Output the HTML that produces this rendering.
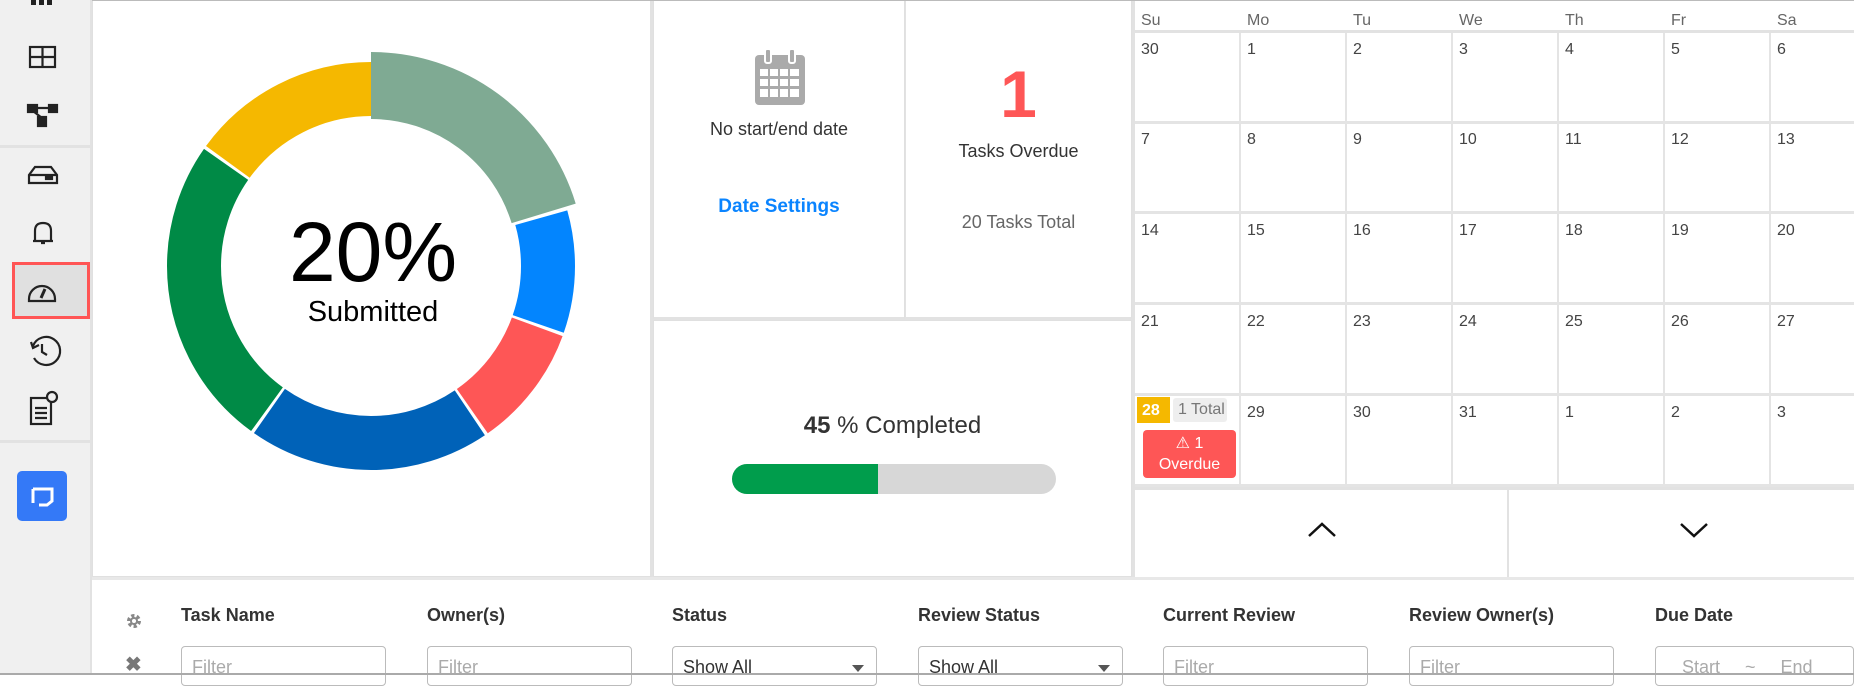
<!DOCTYPE html>
<html><head><meta charset="utf-8"><style>
*{box-sizing:border-box;margin:0;padding:0}
body{width:1854px;height:675px;overflow:hidden;background:#fff;font-family:"Liberation Sans",sans-serif;color:#333;position:relative}
.abs{position:absolute}
.sb{left:0;top:0;width:92px;height:675px;background:#f0f0f0;border-right:2px solid #e2e2e2}
.hr{position:absolute;left:0;width:90px;height:3px;background:#e2e2e2}
.panel{position:absolute;border:1px solid #e0e0e0;background:#fff}
.cal{left:1132px;top:0;width:722px;height:577px;border-left:3px solid #e2e2e2}
.dh{position:absolute;top:12px;font-size:16px;color:#666}
.cell{position:absolute;border-right:2px solid #e4e4e4;border-bottom:3px solid #e4e4e4;font-size:16px;color:#444;padding:8px 0 0 6px}
.th{position:absolute;top:605px;font-size:18px;font-weight:bold;color:#333}
.inp{position:absolute;top:646px;width:205px;height:40px;border:1px solid #bbb;border-radius:4px;font-size:18px;color:#aaa;padding:10px 0 0 10px}
.sel{color:#333}
.sel:after{content:"";position:absolute;right:12px;top:18px;border:6px solid transparent;border-top:7px solid #555}
</style></head><body>
<div class="abs sb">
  <div class="hr" style="top:145px"></div>
  <div class="hr" style="top:440px"></div>
  <svg class="abs" style="left:0;top:0" width="90" height="540" fill="none" stroke="#222" stroke-width="2.2">
    <rect x="31" y="0" width="5" height="5" fill="#222" stroke="none"/><rect x="39" y="0" width="5" height="5" fill="#222" stroke="none"/><rect x="47" y="0" width="5" height="5" fill="#222" stroke="none"/>
    <rect x="30" y="47" width="25" height="20"/><line x1="42.5" y1="47" x2="42.5" y2="67"/><line x1="30" y1="57" x2="55" y2="57"/>
    <rect x="28" y="105" width="9" height="7" fill="#222"/><rect x="49" y="105" width="8" height="7" fill="#222"/><rect x="38" y="117" width="8" height="9" fill="#222"/><path d="M37 108H49M33 111L42 118"/>
    <path d="M29 183V175L35 167H51L57 175V183Z M29 175H57"/><rect x="46" y="177" width="2" height="2" fill="#222"/><rect x="50" y="177" width="2" height="2" fill="#222"/>
    <path d="M33 241H53M35 240V231C35 225 38 223 43 223C48 223 51 225 51 231V240M41 243H45"/>
  </svg>
  <div class="abs" style="left:12px;top:262px;width:78px;height:57px;background:#e0e0e0;border:3px solid #f55"></div>
  <svg class="abs" style="left:0;top:0" width="90" height="540" fill="none" stroke="#222" stroke-width="2.2">
    <path d="M29 299A13 13 0 0 1 55 299V301H29Z"/><path d="M41 298L45 289" stroke-width="3"/>
    <path d="M33 346A14 14 0 1 1 34 358M31 342L33 348L39 345M42 344V352L47 355"/>
    <rect x="31" y="398" width="20" height="26"/><path d="M35 408H47M35 413H47M35 418H47"/><circle cx="52" cy="397" r="5" fill="#f0f0f0"/>
  </svg>
  <div class="abs" style="left:17px;top:471px;width:50px;height:50px;background:#3479f7;border-radius:5px"></div>
  <svg class="abs" style="left:17px;top:471px" width="50" height="50" fill="none" stroke="#fff" stroke-width="3"><path d="M16 18V32M16 18H35V30L30 34H22"/></svg>
</div>

<div class="panel" style="left:92px;top:0;width:561px;height:577px;border-right:3px solid #e2e2e2">
<svg class="abs" style="left:0;top:0" width="560" height="577">
 <g transform="rotate(-90 278 265)" fill="none">
  <circle cx="278" cy="265" r="180.5" stroke="#7faa93" stroke-width="67" stroke-dasharray="230 2000" stroke-dashoffset="0"/>
  <circle cx="278" cy="265" r="177" stroke="#0385fe" stroke-width="54" stroke-dasharray="108 2000" stroke-dashoffset="-229"/>
  <circle cx="278" cy="265" r="177" stroke="#fe5656" stroke-width="54" stroke-dasharray="108 2000" stroke-dashoffset="-340"/>
  <circle cx="278" cy="265" r="177" stroke="#0062b8" stroke-width="54" stroke-dasharray="213 2000" stroke-dashoffset="-451"/>
  <circle cx="278" cy="265" r="177" stroke="#008a46" stroke-width="54" stroke-dasharray="275 2000" stroke-dashoffset="-667"/>
  <circle cx="278" cy="265" r="177" stroke="#f5b800" stroke-width="54" stroke-dasharray="167 2000" stroke-dashoffset="-945"/>
 </g>
 <text x="280" y="280" text-anchor="middle" font-size="84" fill="#000" font-family="Liberation Sans">20%</text>
 <text x="280" y="320" text-anchor="middle" font-size="29" fill="#000" font-family="Liberation Sans">Submitted</text>
</svg>
</div>

<div class="panel" style="left:653px;top:0;width:252px;height:320px;border-bottom:3px solid #e2e2e2">
 <svg class="abs" style="left:100px;top:48px" width="52" height="56"><rect x="1" y="6" width="50" height="50" rx="4" fill="#aaa"/><g fill="#fff"><rect x="6" y="20" width="8" height="7"/><rect x="16" y="20" width="8" height="7"/><rect x="26" y="20" width="8" height="7"/><rect x="36" y="20" width="9" height="7"/><rect x="6" y="30" width="8" height="7"/><rect x="16" y="30" width="8" height="7"/><rect x="26" y="30" width="8" height="7"/><rect x="36" y="30" width="9" height="7"/><rect x="6" y="40" width="8" height="8"/><rect x="16" y="40" width="8" height="8"/><rect x="26" y="40" width="8" height="8"/><rect x="36" y="40" width="9" height="8"/></g><rect x="11" y="0" width="6" height="14" rx="2" fill="#aaa" stroke="#fff" stroke-width="2"/><rect x="35" y="0" width="6" height="14" rx="2" fill="#aaa" stroke="#fff" stroke-width="2"/></svg>
 <div class="abs" style="left:0;width:250px;top:118px;text-align:center;font-size:18px;color:#333">No start/end date</div>
 <div class="abs" style="left:0;width:250px;top:195px;text-align:center;font-size:19px;font-weight:bold;color:#0a84ff">Date Settings</div>
</div>
<div class="panel" style="left:905px;top:0;width:227px;height:320px;border-bottom:3px solid #e2e2e2;border-left:1px solid #e2e2e2">
 <div class="abs" style="left:0;width:225px;top:55px;text-align:center;font-size:66px;font-weight:bold;color:#fe5656">1</div>
 <div class="abs" style="left:0;width:225px;top:140px;text-align:center;font-size:18px;color:#333">Tasks Overdue</div>
 <div class="abs" style="left:0;width:225px;top:211px;text-align:center;font-size:18px;color:#666">20 Tasks Total</div>
</div>
<div class="panel" style="left:653px;top:320px;width:479px;height:257px">
 <div class="abs" style="left:0;width:477px;top:91px;text-align:center;font-size:24px;color:#333"><b>45</b> % Completed</div>
 <div class="abs" style="left:78px;top:143px;width:324px;height:30px;border-radius:15px;background:#d7d7d7;overflow:hidden"><div style="width:146px;height:30px;background:#009d4c"></div></div>
</div>

<div class="abs cal">
 <div class="dh" style="left:6px">Su</div><div class="dh" style="left:112px">Mo</div><div class="dh" style="left:218px">Tu</div><div class="dh" style="left:324px">We</div><div class="dh" style="left:430px">Th</div><div class="dh" style="left:536px">Fr</div><div class="dh" style="left:642px">Sa</div>
 <div class="abs" style="left:0;top:30px;width:722px;height:3px;background:#e2e2e2"></div>
 <div id="g"></div>
 <div class="abs" style="left:0;top:487px;width:722px;height:3px;background:#e2e2e2"></div>
 <div class="abs" style="left:372px;top:490px;width:2px;height:87px;background:#e2e2e2"></div>
 <svg class="abs" style="left:172px;top:521px" width="30" height="18"><path d="M2 15L15 3L28 15" fill="none" stroke="#111" stroke-width="2.5"/></svg>
 <svg class="abs" style="left:544px;top:521px" width="30" height="18"><path d="M2 3L15 15L28 3" fill="none" stroke="#111" stroke-width="2.5"/></svg>
</div>

<div class="abs" style="left:92px;top:577px;width:1762px;height:3px;background:#e8e8e8"></div>
<svg class="abs" style="left:125px;top:612px" width="18" height="18"><circle cx="9" cy="9" r="5" fill="none" stroke="#888" stroke-width="4" stroke-dasharray="3 2.2"/><circle cx="9" cy="9" r="4" fill="#888"/><circle cx="9" cy="9" r="2" fill="#fff"/></svg>
<div class="abs" style="left:125px;top:652px;font-size:20px;font-weight:bold;color:#777">✖</div>
<div class="th" style="left:181px">Task Name</div>
<div class="th" style="left:427px">Owner(s)</div>
<div class="th" style="left:672px">Status</div>
<div class="th" style="left:918px">Review Status</div>
<div class="th" style="left:1163px">Current Review</div>
<div class="th" style="left:1409px">Review Owner(s)</div>
<div class="th" style="left:1655px">Due Date</div>
<div class="inp" style="left:181px">Filter</div>
<div class="inp" style="left:427px">Filter</div>
<div class="inp sel" style="left:672px">Show All</div>
<div class="inp sel" style="left:918px">Show All</div>
<div class="inp" style="left:1163px">Filter</div>
<div class="inp" style="left:1409px">Filter</div>
<div class="inp" style="left:1655px;width:199px;padding-left:26px">Start &nbsp; &nbsp; ~ &nbsp; &nbsp; End</div>
<div class="abs" style="left:0;top:673px;width:1854px;height:2px;background:#aaa"></div>
<div class="abs" style="left:92px;top:0;width:1762px;height:1px;background:#bbb"></div>

<script>
var g=document.getElementById('g'),h='';
var rows=[[30,1,2,3,4,5,6],[7,8,9,10,11,12,13],[14,15,16,17,18,19,20],[21,22,23,24,25,26,27],[28,29,30,31,1,2,3]];
var tops=[33,123,214,305,396];
for(var r=0;r<5;r++)for(var c=0;c<7;c++){
 var t=(r==4&&c==0)?'':rows[r][c];
 h+='<div class="cell" style="left:'+(c*106)+'px;top:'+tops[r]+'px;width:'+(c==6?116:106)+'px;height:91px">'+t+'</div>';
}
g.innerHTML=h+'<div class="abs" style="left:2px;top:397px;width:33px;height:26px;background:#f5b800;color:#fff;font-weight:bold;font-size:16px;padding:5px 0 0 5px">28</div><div class="abs" style="left:38px;top:398px;width:54px;height:24px;background:#eee;color:#777;font-size:16px;padding:3px 0 0 5px;border-radius:3px">1 Total</div><div class="abs" style="left:8px;top:430px;width:93px;height:48px;background:#fe5656;color:#fff;border-radius:4px;text-align:center;font-size:16px;line-height:21px;padding-top:3px">&#9888; 1<br>Overdue</div>';
</script>
</body></html>
